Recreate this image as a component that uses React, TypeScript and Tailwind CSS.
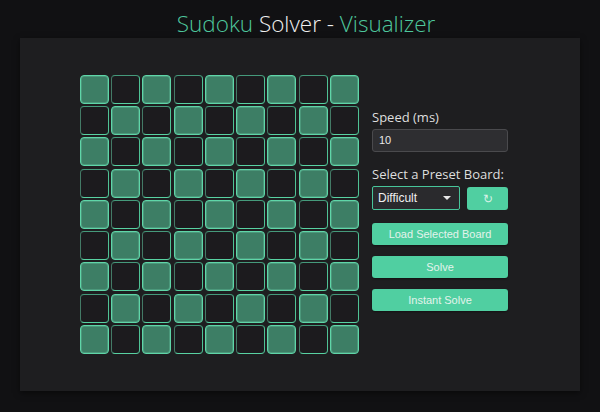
import React from "react";

const font = { fontFamily: '"Open Sans", "Noto Sans", sans-serif' };
const arial = { fontFamily: '"Liberation Sans", Arial, sans-serif' };

function Cell({ green }: { green: boolean }) {
  return green ? (
    <div className="w-[29px] h-[29px] rounded-[4px] border border-[#5fd6a8] bg-[#3d7e65] shadow-[inset_0_0_0_1px_rgba(120,230,190,0.25)]" />
  ) : (
    <div className="w-[29px] h-[29px] rounded-[4px] border border-[#4fc295] border-l-[#437a66] border-t-[#459a7b] border-b-[#58d2a2] bg-[#1c1b1e]" />
  );
}

export default function App() {
  const cells: boolean[] = [];
  for (let r = 0; r < 9; r++) for (let c = 0; c < 9; c++) cells.push((r + c) % 2 === 0);

  return (
    <div className="w-[600px] h-[412px] bg-[#111113] flex flex-col overflow-hidden" style={font}>
      <h1 className="h-[38px] flex items-center justify-center text-[22.5px] font-light leading-none pt-[10px] pl-[12px]">
        <span className="text-[#4ec79d]">Sudoku</span>
        <span className="text-[#f0f0f0]">&nbsp;Solver -&nbsp;</span>
        <span className="text-[#4ec79d]">Visualizer</span>
      </h1>
      <div className="mx-5 h-[353px] bg-[#1e1e20] shadow-[0_2px_6px_rgba(0,0,0,0.5)] flex pl-[60px] pt-[37px]">
        <div className="grid grid-cols-9 gap-[2px] w-[279px] h-[279px]">
          {cells.map((g, i) => (
            <Cell key={i} green={g} />
          ))}
        </div>
        <div className="ml-[13px] w-[136px] flex flex-col pt-[34px]">
          <label className="text-[13px] leading-[16px] text-[#dedede]">Speed (ms)</label>
          <div
            className="mt-[4px] h-[23px] rounded-[3px] border border-[#4a4a4d] bg-[#2e2e31] flex items-center px-[6px] text-[11px] text-[#e8e8e8]"
            style={arial}
          >
            10
          </div>
          <label className="mt-[14px] text-[13px] leading-[16px] text-[#dedede]">Select a Preset Board:</label>
          <div className="mt-[4px] flex h-[24px] gap-[7px]">
            <div
              className="w-[88px] h-[24px] rounded-[2px] border border-[#47c59a] bg-[#2a2a2d] flex items-center justify-between pl-[5px] pr-[8px] text-[12px] text-[#f0f0f0]"
              style={arial}
            >
              <span>Difficult</span>
              <span className="w-0 h-0 border-l-[4px] border-r-[4px] border-t-[4px] border-l-transparent border-r-transparent border-t-[#e8e8e8]" />
            </div>
            <button className="w-[41px] h-[23px] mt-[1px] rounded-[3px] bg-[#50cfa1] flex items-center justify-center text-[12px] text-[#d6f1e6]" style={arial}>
              ↻
            </button>
          </div>
          <button className="mt-[13px] h-[22px] rounded-[3px] bg-[#50cfa1] text-[11px] text-[#e3f3ec] shadow-[0_1px_2px_rgba(0,0,0,0.4)]" style={arial}>
            Load Selected Board
          </button>
          <button className="mt-[11px] h-[22px] rounded-[3px] bg-[#50cfa1] text-[11px] text-[#e3f3ec] shadow-[0_1px_2px_rgba(0,0,0,0.4)]" style={arial}>
            Solve
          </button>
          <button className="mt-[11px] h-[22px] rounded-[3px] bg-[#50cfa1] text-[11px] text-[#e3f3ec] shadow-[0_1px_2px_rgba(0,0,0,0.4)]" style={arial}>
            Instant Solve
          </button>
        </div>
      </div>
    </div>
  );
}
